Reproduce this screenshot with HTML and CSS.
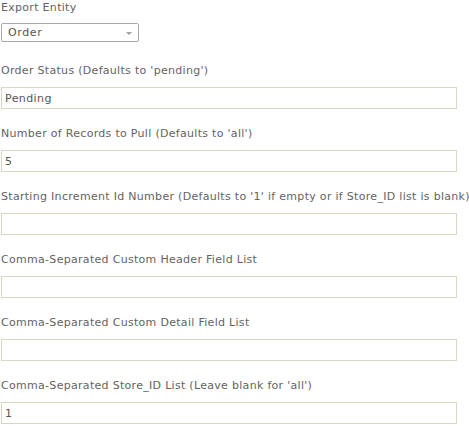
FILE: index.html
```html
<!DOCTYPE html>
<html>
<head>
<meta charset="utf-8">
<link rel="stylesheet" href="styles.css">
</head>
<body>
<form class="form">
  <div class="field field-select">
    <label class="label">Export Entity</label>
    <div class="select">
      <span class="select-value">Order</span>
      <span class="select-arrow"></span>
    </div>
  </div>
  <div class="field">
    <label class="label">Order Status (Defaults to 'pending')</label>
    <input class="input" type="text" value="Pending">
  </div>
  <div class="field">
    <label class="label">Number of Records to Pull (Defaults to 'all')</label>
    <input class="input" type="text" value="5">
  </div>
  <div class="field">
    <label class="label">Starting Increment Id Number (Defaults to '1' if empty or if Store_ID list is blank)</label>
    <input class="input" type="text" value="">
  </div>
  <div class="field">
    <label class="label">Comma-Separated Custom Header Field List</label>
    <input class="input" type="text" value="">
  </div>
  <div class="field">
    <label class="label">Comma-Separated Custom Detail Field List</label>
    <input class="input" type="text" value="">
  </div>
  <div class="field">
    <label class="label">Comma-Separated Store_ID List (Leave blank for 'all')</label>
    <input class="input" type="text" value="1">
  </div>
</form>
</body>
</html>
```
FILE: styles.css
```css
html, body {
  margin: 0;
  padding: 0;
  background: #ffffff;
}
body {
  font-family: "DejaVu Sans", Verdana, sans-serif;
  color: #636363;
  width: 469px;
  height: 426px;
  overflow: hidden;
}
.form {
  padding-left: 1px;
  display: flex;
  flex-direction: column;
}
.field {
  display: flex;
  flex-direction: column;
  align-items: flex-start;
  margin-bottom: 17px;
}
.field-select {
  margin-bottom: 21px;
}
.label {
  display: block;
  font-size: 11px;
  line-height: 16px;
  margin-bottom: 8px;
  white-space: nowrap;
  letter-spacing: 0.3px;
}
.field-select .label {
  margin-bottom: 7px;
}
.select {
  box-sizing: border-box;
  width: 138px;
  height: 19px;
  border: 1px solid #a9a9a9;
  border-radius: 2px;
  display: flex;
  align-items: center;
  justify-content: space-between;
  padding: 0 6px 0 6px;
  font-size: 11px;
  letter-spacing: 0.6px;
  color: #555555;
  background: #fff;
}
.select-arrow {
  width: 0;
  height: 0;
  border-left: 3px solid transparent;
  border-right: 3px solid transparent;
  border-top: 3px solid #a0a0a0;
  margin-top: 2px;
}
.input {
  box-sizing: border-box;
  width: 456px;
  height: 22px;
  margin: 0;
  border: 1px solid #d9d6c2;
  padding: 0 3px;
  font-family: "DejaVu Sans", Verdana, sans-serif;
  font-size: 11px;
  letter-spacing: 0.4px;
  color: #555555;
  background: #fff;
  outline: none;
}
```
